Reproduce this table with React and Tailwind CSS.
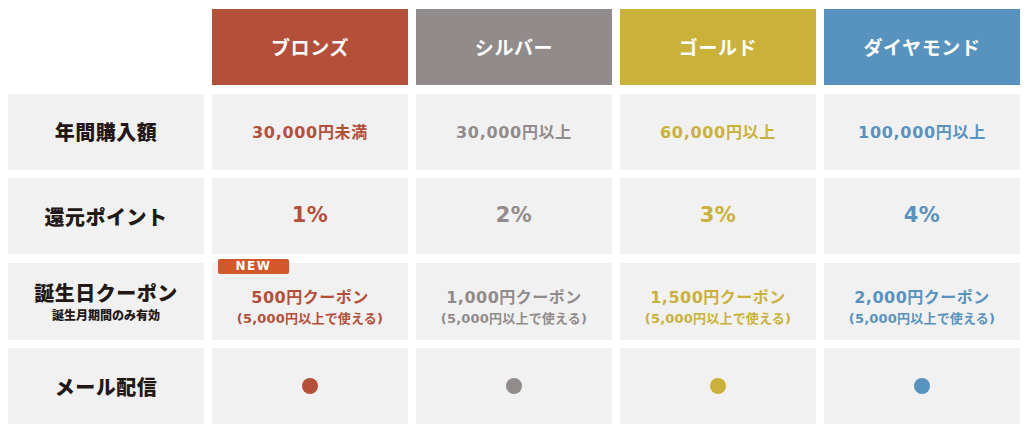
import React from 'react';

const tiers = [
  { name: 'ブロンズ', bg: 'bg-[#b44f3a]', text: 'text-[#b44f3a]', amount: '30,000', amountSuffix: '円未満', point: '1%', coupon: '500', isNew: true },
  { name: 'シルバー', bg: 'bg-[#918c8b]', text: 'text-[#918c8b]', amount: '30,000', amountSuffix: '円以上', point: '2%', coupon: '1,000' },
  { name: 'ゴールド', bg: 'bg-[#cab13a]', text: 'text-[#cab13a]', amount: '60,000', amountSuffix: '円以上', point: '3%', coupon: '1,500' },
  { name: 'ダイヤモンド', bg: 'bg-[#5893c0]', text: 'text-[#5893c0]', amount: '100,000', amountSuffix: '円以上', point: '4%', coupon: '2,000' },
];

// Japanese text font / Latin digits font (wide bold digits)
const jp = "font-['Noto_Sans_CJK_JP','Noto_Sans',sans-serif]";
const num = "font-['DejaVu_Sans','Noto_Sans_CJK_JP',sans-serif]";

const Label = ({ children, sub }) => (
  <div className={`bg-[#f1f1f1] flex flex-col items-center justify-center text-[#231815] ${jp}`}>
    <span className="text-[20px] font-black leading-[27px] tracking-[0.5px]">{children}</span>
    {sub && <span className="text-[12px] font-black leading-[18px]">{sub}</span>}
  </div>
);

const Cell = ({ children, className = '' }) => (
  <div className={`relative bg-[#f1f1f1] flex flex-col items-center justify-center ${className}`}>
    {children}
  </div>
);

export default function App() {
  return (
    <div className="w-[1028px] h-[434px] bg-white pl-[8px] pt-[9px]">
      <div className="grid grid-cols-[196px_196px_196px_196px_196px] gap-x-[8px] gap-y-[8.5px] grid-rows-[76px_76px_76px_77px_76px]">
        {/* Header */}
        <div />
        {tiers.map((t) => (
          <div key={t.name} className={`${t.bg} flex items-center justify-center`}>
            <span className={`text-white text-[19px] font-bold tracking-[0.6px] ${jp}`}>{t.name}</span>
          </div>
        ))}

        {/* Annual purchase */}
        <Label>年間購入額</Label>
        {tiers.map((t) => (
          <Cell key={t.name}>
            <span className={`${t.text} font-bold text-[16px] tracking-[0.7px] ${num}`}>
              {t.amount}<span className={jp}>{t.amountSuffix}</span>
            </span>
          </Cell>
        ))}

        {/* Points */}
        <Label>還元ポイント</Label>
        {tiers.map((t) => (
          <Cell key={t.name}>
            <span className={`${t.text} font-bold text-[21px] tracking-[0.5px] ${num}`}>{t.point}</span>
          </Cell>
        ))}

        {/* Birthday coupon */}
        <Label sub="誕生月期間のみ有効">誕生日クーポン</Label>
        {tiers.map((t) => (
          <Cell key={t.name} className="pt-[10px]">
            {t.isNew && (
              <span className={`absolute left-[6px] top-[-4px] w-[71px] h-[15px] rounded-[2px] bg-[#d2572a] text-white text-[12px] font-bold leading-[15px] tracking-[1.5px] text-center ${num}`}>
                NEW
              </span>
            )}
            <span className={`${t.text} font-bold text-[16px] leading-[22px] tracking-[0.5px] ${num}`}>
              {t.coupon}<span className={jp}>円クーポン</span>
            </span>
            <span className={`${t.text} font-bold text-[13px] leading-[18px] tracking-[0.2px] ${num}`}>
              (5,000<span className={jp}>円以上で使える</span>)
            </span>
          </Cell>
        ))}

        {/* Mail */}
        <Label>メール配信</Label>
        {tiers.map((t) => (
          <Cell key={t.name}>
            <span className={`${t.bg} w-[16px] h-[16px] rounded-full`} />
          </Cell>
        ))}
      </div>
    </div>
  );
}
